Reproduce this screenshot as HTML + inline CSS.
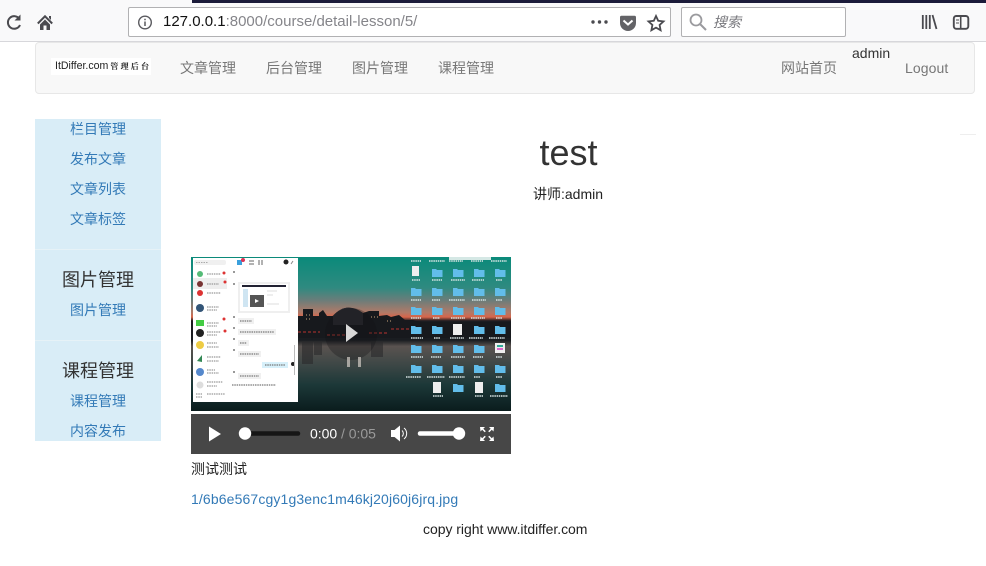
<!DOCTYPE html>
<html lang="zh"><head><meta charset="utf-8"><title>test</title>
<style>
html,body{margin:0;padding:0;background:#fff;width:986px;height:566px;overflow:hidden}
body{font-family:"Liberation Sans","Noto Sans CJK SC",sans-serif;font-size:14px;color:#333;position:relative}
.a{position:absolute;white-space:nowrap;line-height:20px}
.n{color:#777}
.s{color:#337ab7;width:126px;left:35px;text-align:center}
.h{color:#333;width:126px;left:35px;text-align:center;font-size:18px}
svg{position:absolute;overflow:visible}
</style></head><body>
<!-- browser chrome -->
<div class="a" style="left:0;top:0;width:986px;height:41px;background:#f9f9fa;border-bottom:1px solid #d7d7db"></div>
<div class="a" style="left:192px;top:0;width:794px;height:3px;background:#1b1b3a"></div>
<svg style="left:0;top:0" width="60" height="42" fill="none">
<path d="M19.500 19A6.300 6.300 0 1 0 20 25" stroke="#4a4a4f" stroke-width="2"/>
<path d="M20.500 14.500v6h-6z" fill="#4a4a4f"/>
<path d="M37.800 23.500L45 16.300l7.200 7.200" stroke="#4a4a4f" stroke-width="2"/>
<path d="M49 16h2v4l-2-2z" fill="#4a4a4f"/>
<path d="M40 24.500V30h3.500v-4.500h3V30H50v-5.500L45 19.500z" fill="#4a4a4f"/>
</svg>
<div class="a" style="left:128px;top:7px;width:541px;height:28px;background:#fff;border:1px solid #b1b1b3;border-radius:2px"></div>
<svg style="left:136px;top:14px" width="18" height="16" fill="none"><circle cx="9" cy="8.500" r="6.300" stroke="#5a5a5f" stroke-width="1.400"/><path d="M9 7.500v4.500M9 4.800v1.400" stroke="#5a5a5f" stroke-width="1.500"/></svg>
<div class="a" style="left:163px;top:12px;font-size:15px;color:#85858a"><span style="color:#111">127.0.0.1</span>:8000/course/detail-lesson/5/</div>
<svg style="left:590px;top:10px" width="80" height="24">
<circle cx="3" cy="12" r="1.700" fill="#4a4a4f"/><circle cx="9.500" cy="12" r="1.700" fill="#4a4a4f"/><circle cx="16" cy="12" r="1.700" fill="#4a4a4f"/>
<path d="M31.500 5.700h13a1.500 1.500 0 0 1 1.500 1.500v5.800a8 8 0 0 1-16 0V7.200A1.500 1.500 0 0 1 31.500 5.700z" fill="#636367"/>
<path d="M33.500 10.500L38 14.500l4.500-4" stroke="#fff" stroke-width="2" fill="none"/>
<path d="M66 6l2.200 4.800 5.300.6-3.900 3.600 1 5.200-4.600-2.600-4.600 2.600 1-5.200-3.900-3.600 5.300-.6z" fill="none" stroke="#4a4a4f" stroke-width="1.800"/>
</svg>
<div class="a" style="left:681px;top:7px;width:163px;height:28px;background:#fff;border:1px solid #b1b1b3;border-radius:2px"></div>
<svg style="left:689px;top:13px" width="20" height="20" fill="none"><circle cx="7" cy="7" r="5.500" stroke="#9a9a9e" stroke-width="1.800"/><path d="M11 11l6 6" stroke="#9a9a9e" stroke-width="2"/></svg>
<div class="a" style="left:713px;top:12px;font-size:14px;font-style:italic;color:#77777c">搜索</div>
<svg style="left:920px;top:13px" width="52" height="20" fill="none">
<path d="M2.800 2v14M6.300 2v14M9.800 2v14M12.500 2l4 14" stroke="#4a4a4f" stroke-width="1.800"/>
<rect x="33.800" y="3" width="14.500" height="12.800" rx="2.500" stroke="#4a4a4f" stroke-width="1.900"/>
<path d="M40.700 3.500v12" stroke="#4a4a4f" stroke-width="1.600"/><path d="M36 7h3M36 10h3" stroke="#4a4a4f"/>
</svg>
<!-- navbar -->
<div class="a" style="left:35px;top:42px;width:938px;height:50px;background:#f8f8f8;border:1px solid #e7e7e7;border-radius:4px"></div>
<div class="a" style="left:51px;top:58px;width:100px;height:17px;line-height:17px;background:#fff;font-size:10.600px;color:#222;padding-left:4px;box-sizing:border-box">ItDiffer.com<span style="font-family:'Noto Serif CJK SC',serif;font-size:8px;letter-spacing:2.200px;margin-left:2px;font-weight:700">管理后台</span></div>
<div class="a n" style="left:180px;top:58px">文章管理</div>
<div class="a n" style="left:266px;top:58px">后台管理</div>
<div class="a n" style="left:352px;top:58px">图片管理</div>
<div class="a n" style="left:438px;top:58px">课程管理</div>
<div class="a n" style="left:781px;top:58px">网站首页</div>
<div class="a" style="left:852px;top:43px;color:#333">admin</div>
<div class="a n" style="left:905px;top:58px;letter-spacing:.1px">Logout</div>
<!-- sidebar -->
<div class="a" style="left:35px;top:119px;width:126px;height:322px;background:#d9edf7;overflow:hidden"></div>
<div class="a" style="left:35px;top:249px;width:126px;height:1px;background:#e6f2f7"></div>
<div class="a" style="left:35px;top:340px;width:126px;height:1px;background:#e6f2f7"></div>
<div class="a s" style="top:119px">栏目管理</div>
<div class="a s" style="top:149px">发布文章</div>
<div class="a s" style="top:179px">文章列表</div>
<div class="a s" style="top:209px">文章标签</div>
<div class="a h" style="top:270px">图片管理</div>
<div class="a s" style="top:300px">图片管理</div>
<div class="a h" style="top:361px">课程管理</div>
<div class="a s" style="top:391px">课程管理</div>
<div class="a s" style="top:421px">内容发布</div>
<!-- main -->
<div class="a" style="left:960px;top:134px;width:16px;height:1px;background:#eee"></div>
<div class="a" style="left:161px;top:133px;width:815px;text-align:center;font-size:36px;line-height:40px;color:#333">test</div>
<div class="a" style="left:160px;top:184px;width:816px;text-align:center;color:#222">讲师:admin</div>
<!-- video -->
<svg style="left:191px;top:257px" width="320" height="197" viewBox="0 0 320 197">
<defs>
<linearGradient id="sky" x1="0" y1="0" x2="0" y2="1">
<stop offset="0" stop-color="#0a8a7a"/><stop offset=".2" stop-color="#2f8a80"/><stop offset=".28" stop-color="#6a7d7a"/><stop offset=".36" stop-color="#b07a68"/><stop offset=".39" stop-color="#d8654a"/><stop offset=".415" stop-color="#1c1c21"/><stop offset=".54" stop-color="#1a1d21"/><stop offset=".58" stop-color="#5a5350"/><stop offset=".7" stop-color="#3d4746"/><stop offset=".83" stop-color="#1c3838"/><stop offset="1" stop-color="#0a1c1d"/>
</linearGradient>
<g id="f"><path d="M0 1h4l1 1h5.500v7H0z" fill="#62bdea"/></g>
</defs>
<rect width="320" height="154" fill="url(#sky)"/>
<path d="M107 59h5v-7h10v7h6v-3l4-3 4 6h6q13-15 30-3l6-2h10v5l8-1 4 2 8-2 6 5h8l8 2h90v16H107z" fill="#17191d"/>
<path d="M142 59q13-15 30-3v12h-30z" fill="#2a2a30"/>
<path d="M107 75h22M136 78h24M178 76h20M200 72h22" stroke="#b8342f" stroke-width="1" stroke-dasharray="3 2"/>
<path d="M115 58h4M115 62h5M180 60h8M196 64h6" stroke="#c9a57a" stroke-dasharray="1 2"/>
<path d="M111 84h11v23h-11zM123 84h8v14h-8zM180 84h12v16h-12z" fill="#29292b" opacity=".6"/>
<circle cx="160" cy="77" r="26" fill="#121417" opacity=".32"/>
<path d="M156 100h3v10h-3zM167 100h3v10h-3z" fill="#c9c4bd" opacity=".75"/>
<path d="M155 67v18l12-9z" fill="#d8d8d8"/>
<!-- folders -->
<g>
<path d="M221 9h7v10h-7z" fill="#eee"/><use href="#f" x="241" y="11"/><use href="#f" x="262" y="11"/><use href="#f" x="283" y="11"/><use href="#f" x="304" y="11"/>
<use href="#f" x="220" y="30"/><use href="#f" x="241" y="30"/><use href="#f" x="262" y="30"/><use href="#f" x="283" y="30"/><use href="#f" x="304" y="30"/>
<use href="#f" x="220" y="49"/><use href="#f" x="241" y="49"/><use href="#f" x="262" y="49"/><use href="#f" x="283" y="49"/><use href="#f" x="304" y="49"/>
<use href="#f" x="220" y="68"/><use href="#f" x="241" y="68"/><rect x="262" y="67" width="9" height="11" fill="#eee"/><use href="#f" x="283" y="68"/><use href="#f" x="304" y="68"/>
<use href="#f" x="220" y="87"/><use href="#f" x="241" y="87"/><use href="#f" x="262" y="87"/><use href="#f" x="283" y="87"/><rect x="304" y="86" width="10" height="10" fill="#eee"/><rect x="306" y="88" width="6" height="2" fill="#3a9"/><rect x="306" y="91" width="6" height="2" fill="#d6c"/>
<use href="#f" x="220" y="107"/><use href="#f" x="241" y="107"/><use href="#f" x="262" y="107"/><use href="#f" x="283" y="107"/><use href="#f" x="304" y="107"/>
<rect x="242" y="125" width="8" height="11" fill="#eee"/><use href="#f" x="262" y="126"/><rect x="284" y="125" width="8" height="11" fill="#eee"/><use href="#f" x="304" y="126"/>
</g>
<rect x="258" y="0" width="42" height="3" fill="#d5e8e5"/>
<path d="M220 4h10M238 4h16M258 4h14M280 4h12M300 4h16M221 23h8M241 23h10M260 23h14M281 23h12M305 23h6M220 43h10M241 43h8M258 43h16M281 43h14M305 43h6M220 61h10M242 61h7M260 61h14M280 61h14M305 61h6M220 81h12M243 81h6M259 81h14M278 81h14M298 81h16M220 100h12M240 100h10M260 100h14M282 100h10M305 100h6M215 120h15M236 120h18M258 120h16M283 120h6M305 120h6M242 139h10M284 139h8M299 139h18" stroke="#d8e4e4" stroke-width="1.500" stroke-dasharray="1.500 .7"/>
<!-- chat window -->
<rect x="2" y="1" width="105" height="144" fill="#fff"/>
<rect x="3" y="3" width="32" height="5" rx="2" fill="#f0f0f0"/><path d="M5 5.500h12" stroke="#aaa" stroke-dasharray="1.500 1"/>
<rect x="46" y="3" width="5" height="5" fill="#3aa0dd"/><circle cx="52" cy="3" r="2" fill="#d35"/><path d="M58 4h5M58 7h5" stroke="#666"/><path d="M68 3v5M71 3v5" stroke="#666"/><circle cx="95" cy="5" r="2.500" fill="#222"/><path d="M100 7l2-3" stroke="#888"/>
<rect x="2" y="21" width="34" height="11" fill="#eee"/>
<circle cx="9" cy="17" r="3" fill="#5b7"/><circle cx="9" cy="27" r="3" fill="#733"/><circle cx="9" cy="36" r="3" fill="#d33"/><circle cx="9" cy="51" r="4" fill="#357"/><rect x="5" y="63" width="8" height="6" fill="#4c4"/><circle cx="9" cy="76" r="4" fill="#222"/><circle cx="9" cy="88" r="4" fill="#ec4"/><path d="M6 104l5-6v7z" fill="#385"/><circle cx="9" cy="115" r="4" fill="#58c"/><circle cx="9" cy="128" r="3.500" fill="#ddd"/>
<path d="M16 17h14M16 27h12M16 36h14M16 50h12M16 53h10M16 66h12M16 69h10M16 75h14M16 78h10M16 86h10M16 90h12M16 100h14M16 104h12M16 113h8M16 116h12M16 125h16M16 129h10M16 137h18M5 137h6M5 140h6" stroke="#999" stroke-width="1.200" stroke-dasharray="1.500 .8"/>
<circle cx="33" cy="16" r="1.500" fill="#d33"/><circle cx="34" cy="25" r="1.500" fill="#d33"/><circle cx="33" cy="62" r="1.500" fill="#d33"/><circle cx="34" cy="74" r="1.500" fill="#d33"/>
<rect x="47" y="25" width="52" height="31" fill="#efefef"/><rect x="49" y="27" width="48" height="27" fill="#fff"/><rect x="51" y="28" width="44" height="2" fill="#223"/><rect x="52" y="32" width="5" height="18" fill="#cfe5f2"/><rect x="59" y="38" width="14" height="12" fill="#555"/><path d="M64 42l4 2-4 2z" fill="#fff"/><path d="M76 34h10M76 38h6M76 47h12" stroke="#ddd"/>
<rect x="47" y="61" width="16" height="6" fill="#f0f0f0"/><rect x="47" y="72" width="38" height="6" fill="#f0f0f0"/><rect x="47" y="83" width="11" height="6" fill="#f0f0f0"/><rect x="47" y="94" width="23" height="6" fill="#f0f0f0"/><rect x="71" y="105" width="26" height="6" fill="#d7f0fa"/><rect x="47" y="116" width="23" height="6" fill="#f0f0f0"/>
<path d="M49 64h12M49 75h34M49 86h7M49 97h19M74 108h20M49 119h19M41 128h44" stroke="#777" stroke-width="1.200" stroke-dasharray="1.500 .8"/>
<path d="M42 15h2M42 27h2M42 60h2M42 71h2M42 82h2M42 93h2M42 115h2" stroke="#999" stroke-width="2"/>
<circle cx="102" cy="107" r="2" fill="#222"/><rect x="103" y="88" width="1" height="30" fill="#bbb"/>
<!-- controls -->
<rect y="157" width="320" height="40" fill="#474747"/>
<path d="M18 169.500v15l12-7.500z" fill="#fff"/>
<path d="M54 176.500h53" stroke="#161616" stroke-width="4.500" stroke-linecap="round"/>
<circle cx="54" cy="176.500" r="6.200" fill="#fff"/>
<text x="119" y="181.500" font-size="14" fill="#fff" font-family="Liberation Sans" letter-spacing="-.03">0:00<tspan fill="#9a9a9a"> / 0:05</tspan></text>
<path d="M200 173h3.500l5.500-4.500v16l-5.500-4.500H200z" fill="#fff"/>
<path d="M211 173.500a4 4 0 0 1 0 6M213 171a7 7 0 0 1 0 11" stroke="#fff" fill="none"/>
<path d="M229 176.500h39" stroke="#fff" stroke-width="4.500" stroke-linecap="round"/>
<circle cx="268" cy="176.500" r="6.200" fill="#fff"/>
<path d="M289 170h5l-1.700 1.700 2.500 2.500-1.100 1.100-2.500-2.500-1.700 1.700zM303 170h-5l1.700 1.700-2.500 2.500 1.100 1.100 2.500-2.500 1.700 1.700zM289 184h5l-1.700-1.700 2.500-2.500-1.100-1.100-2.500 2.500-1.700-1.700zM303 184h-5l1.700-1.700-2.500-2.500 1.100-1.100 2.500 2.500 1.700-1.700z" fill="#fff"/>
</svg>
<div class="a" style="left:191px;top:459px;font-size:14px;color:#222">测试测试</div>
<div class="a" style="left:191px;top:489px;color:#337ab7;letter-spacing:.13px">1/6b6e567cgy1g3enc1m46kj20j60j6jrq.jpg</div>
<div class="a" style="left:423px;top:519px;color:#222;letter-spacing:-.04px">copy right www.itdiffer.com</div>
</body></html>
